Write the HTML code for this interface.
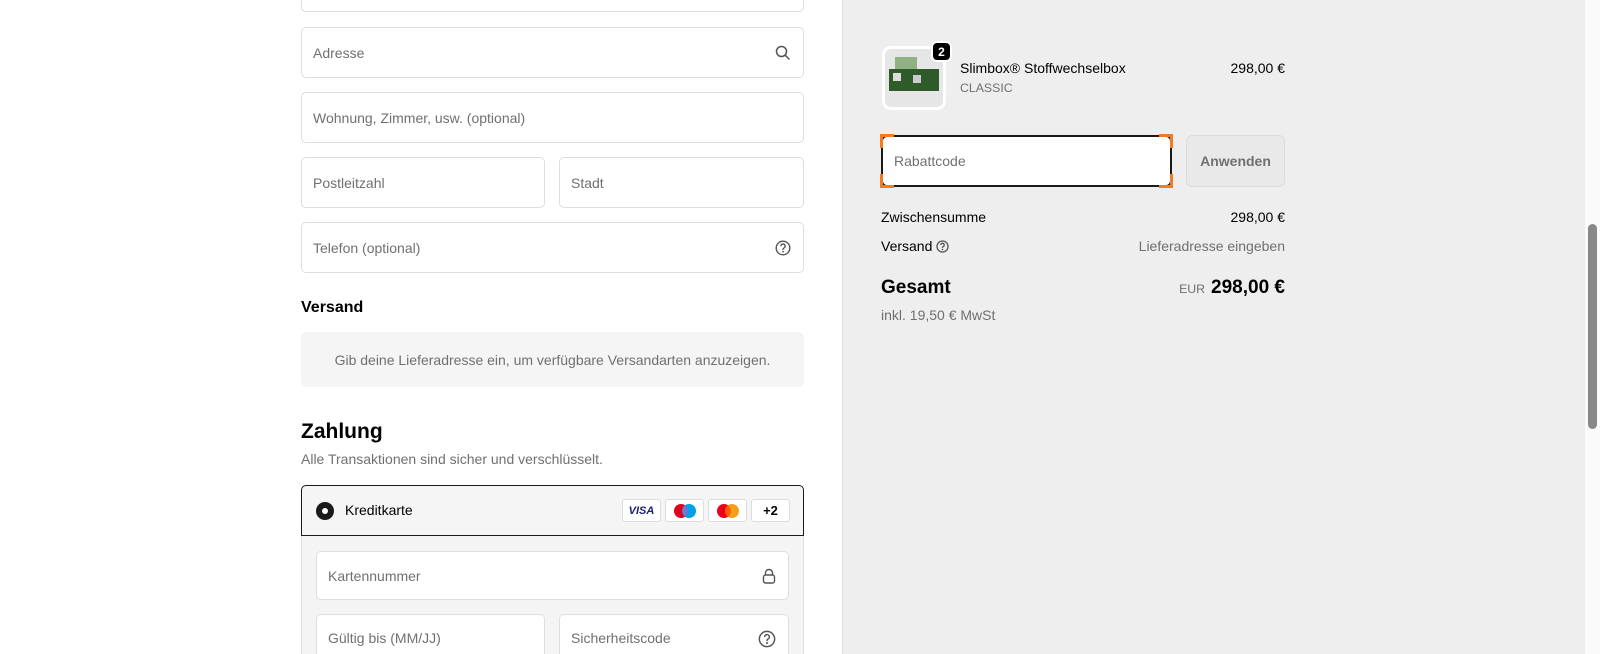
<!DOCTYPE html>
<html style="height:654px;overflow:hidden"><head><meta charset="utf-8"><style>
*{box-sizing:border-box;margin:0;padding:0}
body{width:1600px;height:654px;overflow:hidden;background:#fff;font-family:"Liberation Sans",sans-serif;font-size:14px;color:#000;position:relative}
.a{position:absolute}
.inp{position:absolute;border:1px solid #dedede;border-radius:5px;background:#fff;color:#707070;padding-left:11px;display:flex;align-items:center}
.ic{position:absolute;right:12px;top:50%;transform:translateY(-50%)}
.right{position:absolute;left:842px;top:0;width:743px;height:654px;background:#eeeeee;border-left:1px solid #dedede}
.row{position:absolute;left:881px;width:404px;display:flex;justify-content:space-between}
.card{position:absolute;top:499px;height:23px;border:1px solid #ddd;border-radius:3px;background:#fff;width:39px;display:flex;align-items:center;justify-content:center}
</style></head><body>
<div class="inp" style="left:301px;top:0;width:503px;height:12px;border-top:none;border-radius:0 0 5px 5px"></div>
<div class="inp" style="left:301px;top:27px;width:503px;height:51px">Adresse
<svg class="ic" width="16" height="16" viewBox="0 0 16 16"><circle cx="6.5" cy="6.5" r="5" fill="none" stroke="#555" stroke-width="1.5"/><path d="M10.2 10.2L14.5 14.5" stroke="#555" stroke-width="1.5"/></svg></div>
<div class="inp" style="left:301px;top:92px;width:503px;height:51px">Wohnung, Zimmer, usw. (optional)</div>
<div class="inp" style="left:301px;top:157px;width:244px;height:51px">Postleitzahl</div>
<div class="inp" style="left:559px;top:157px;width:245px;height:51px">Stadt</div>
<div class="inp" style="left:301px;top:222px;width:503px;height:51px">Telefon (optional)
<svg class="ic" width="16" height="16" viewBox="0 0 16 16"><circle cx="8" cy="8" r="6.8" fill="none" stroke="#555" stroke-width="1.4"/><path d="M5.9 6.2a2.1 2.1 0 1 1 2.9 1.9c-.6.3-.8.7-.8 1.3v.5" fill="none" stroke="#555" stroke-width="1.4"/><circle cx="8" cy="11.6" r=".9" fill="#555"/></svg></div>
<div class="a" style="left:301px;top:299px;font-weight:bold;font-size:16px">Versand</div>
<div class="a" style="left:301px;top:332px;width:503px;height:55px;background:#f5f5f5;border-radius:5px;color:#707070;display:flex;align-items:center;justify-content:center">Gib deine Lieferadresse ein, um verfügbare Versandarten anzuzeigen.</div>
<div class="a" style="left:301px;top:420px;font-weight:bold;font-size:21px">Zahlung</div>
<div class="a" style="left:301px;top:451px;color:#707070">Alle Transaktionen sind sicher und verschlüsselt.</div>
<div class="a" style="left:301px;top:485px;width:503px;height:169px;background:#f4f4f4;border:1px solid #dedede;border-bottom:none;border-radius:5px 5px 0 0"></div>
<div class="a" style="left:301px;top:485px;width:503px;height:51px;background:#f5f5f5;border:1px solid #1a1a1a;border-radius:5px 5px 0 0"></div>
<div class="a" style="left:316px;top:502px;width:18px;height:18px;border-radius:50%;background:#1a1a1a"><div class="a" style="left:6px;top:6px;width:6px;height:6px;border-radius:50%;background:#fff"></div></div>
<div class="a" style="left:345px;top:502px">Kreditkarte</div>
<div class="card" style="left:622px;font-style:italic;font-weight:bold;font-size:11px;color:#1a1f71">VISA</div>
<div class="card" style="left:665px"><svg width="24" height="16"><circle cx="8" cy="8" r="7" fill="#e0001b"/><circle cx="16" cy="8" r="7" fill="#00a0e6"/><path d="M12 2.3a7 7 0 0 1 0 11.4a7 7 0 0 1 0-11.4z" fill="#7375cf"/></svg></div>
<div class="card" style="left:708px"><svg width="24" height="16"><circle cx="8" cy="8" r="7" fill="#eb001b"/><circle cx="16" cy="8" r="7" fill="#f79e1b"/><path d="M12 2.3a7 7 0 0 1 0 11.4a7 7 0 0 1 0-11.4z" fill="#ff5f00"/></svg></div>
<div class="card" style="left:751px;font-weight:bold;font-size:13px">+2</div>
<div class="inp" style="left:316px;top:551px;width:473px;height:49px">Kartennummer
<svg class="ic" width="14" height="16" viewBox="0 0 14 16"><path d="M3.5 7V5a3.5 3.5 0 0 1 7 0v2" fill="none" stroke="#555" stroke-width="1.4"/><rect x="1.5" y="7" width="11" height="8" rx="2" fill="none" stroke="#555" stroke-width="1.4"/></svg></div>
<div class="inp" style="left:316px;top:614px;width:229px;height:40px;border-bottom:none;border-radius:5px 5px 0 0;align-items:flex-start;padding-top:15px">Gültig bis (MM/JJ)</div>
<div class="inp" style="left:559px;top:614px;width:230px;height:40px;border-bottom:none;border-radius:5px 5px 0 0;align-items:flex-start;padding-top:15px">Sicherheitscode
<svg width="18" height="18" viewBox="0 0 16 16" style="position:absolute;right:12px;top:15px"><circle cx="8" cy="8" r="6.8" fill="none" stroke="#555" stroke-width="1.3"/><path d="M5.9 6.2a2.1 2.1 0 1 1 2.9 1.9c-.6.3-.8.7-.8 1.3v.5" fill="none" stroke="#555" stroke-width="1.3"/><circle cx="8" cy="11.6" r=".9" fill="#555"/></svg></div>

<div class="right"></div>
<div class="a" style="left:1585px;top:0;width:15px;height:654px;background:#fafafa"></div>
<div class="a" style="left:1588px;top:224px;width:9px;height:205px;background:#888;border-radius:5px"></div>
<div class="a" style="left:882px;top:46px;width:64px;height:64px;background:#e6e6e6;border:3px solid #fff;border-radius:9px;overflow:hidden">
<div class="a" style="left:10px;top:8px;width:22px;height:14px;background:#6a9a5a;opacity:.7"></div>
<div class="a" style="left:4px;top:20px;width:50px;height:22px;background:#2f5a2a"></div>
<div class="a" style="left:8px;top:24px;width:8px;height:8px;background:#ddd"></div>
<div class="a" style="left:28px;top:26px;width:8px;height:8px;background:#ccc"></div></div>
<div class="a" style="left:931px;top:41px;width:21px;height:21px;background:#000;border:2px solid #fff;border-radius:6px;color:#fff;font-weight:bold;font-size:12px;display:flex;align-items:center;justify-content:center">2</div>
<div class="a" style="left:960px;top:60px">Slimbox® Stoffwechselbox</div>
<div class="a" style="left:960px;top:81px;color:#707070;font-size:12.3px">CLASSIC</div>
<div class="a" style="left:1200px;top:60px;width:85px;text-align:right">298,00 €</div>
<div class="a" style="left:881px;top:135px;width:291px;height:52px;background:#fff;border:2px solid #1a1a1a;border-radius:6px;color:#707070;padding-left:11px;display:flex;align-items:center">Rabattcode</div>
<div class="a" style="left:880px;top:134px;width:14px;height:3px;background:#f47c20"></div><div class="a" style="left:880px;top:134px;width:3px;height:14px;background:#f47c20"></div>
<div class="a" style="left:1159px;top:134px;width:14px;height:3px;background:#f47c20"></div><div class="a" style="left:1170px;top:134px;width:3px;height:14px;background:#f47c20"></div>
<div class="a" style="left:880px;top:185px;width:14px;height:3px;background:#f47c20"></div><div class="a" style="left:880px;top:174px;width:3px;height:14px;background:#f47c20"></div>
<div class="a" style="left:1159px;top:185px;width:14px;height:3px;background:#f47c20"></div><div class="a" style="left:1170px;top:174px;width:3px;height:14px;background:#f47c20"></div>
<div class="a" style="left:1186px;top:135px;width:99px;height:52px;background:#e9e9e9;border:1px solid #dcdcdc;border-radius:6px;color:#707070;font-weight:bold;display:flex;align-items:center;justify-content:center">Anwenden</div>
<div class="row" style="top:209px"><span>Zwischensumme</span><span>298,00 €</span></div>
<div class="row" style="top:238px"><span>Versand <svg width="13" height="13" viewBox="0 0 16 16" style="vertical-align:-2px"><circle cx="8" cy="8" r="6.8" fill="none" stroke="#555" stroke-width="1.6"/><path d="M5.9 6.2a2.1 2.1 0 1 1 2.9 1.9c-.6.3-.8.7-.8 1.3v.5" fill="none" stroke="#555" stroke-width="1.6"/><circle cx="8" cy="11.6" r="1" fill="#555"/></svg></span><span style="color:#707070">Lieferadresse eingeben</span></div>
<div class="row" style="top:277px;align-items:baseline"><span style="font-weight:bold;font-size:19px">Gesamt</span><span><span style="color:#707070;font-size:12.3px;margin-right:6px">EUR</span><b style="font-size:19px">298,00 €</b></span></div>
<div class="a" style="left:881px;top:307px;color:#707070">inkl. 19,50 € MwSt</div>
</body></html>
